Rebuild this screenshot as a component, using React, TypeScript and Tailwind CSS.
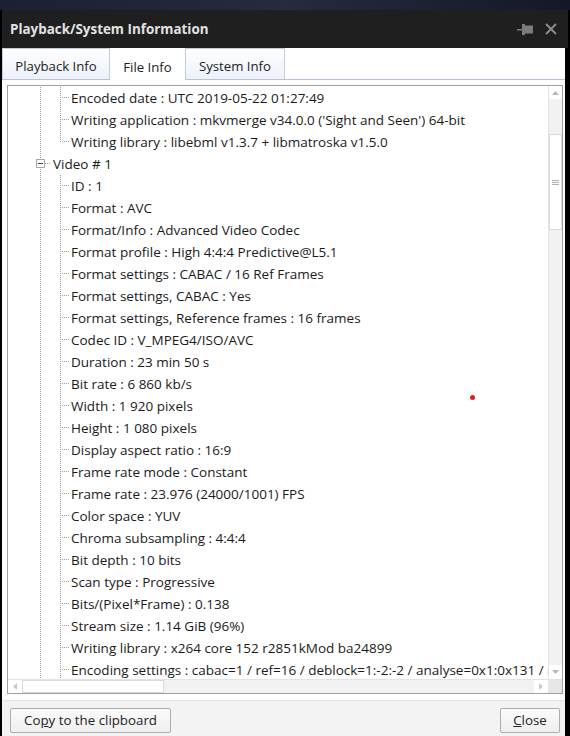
import React from "react";

type Row = { level: 1 | 2; text: string; last?: boolean; open?: boolean };

const rows: Row[] = [
  { level: 2, text: "Encoded date : UTC 2019-05-22 01:27:49" },
  { level: 2, text: "Writing application : mkvmerge v34.0.0 ('Sight and Seen') 64-bit" },
  { level: 2, text: "Writing library : libebml v1.3.7 + libmatroska v1.5.0", last: true },
  { level: 1, text: "Video # 1", open: true },
  { level: 2, text: "ID : 1" },
  { level: 2, text: "Format : AVC" },
  { level: 2, text: "Format/Info : Advanced Video Codec" },
  { level: 2, text: "Format profile : High 4:4:4 Predictive@L5.1" },
  { level: 2, text: "Format settings : CABAC / 16 Ref Frames" },
  { level: 2, text: "Format settings, CABAC : Yes" },
  { level: 2, text: "Format settings, Reference frames : 16 frames" },
  { level: 2, text: "Codec ID : V_MPEG4/ISO/AVC" },
  { level: 2, text: "Duration : 23 min 50 s" },
  { level: 2, text: "Bit rate : 6 860 kb/s" },
  { level: 2, text: "Width : 1 920 pixels" },
  { level: 2, text: "Height : 1 080 pixels" },
  { level: 2, text: "Display aspect ratio : 16:9" },
  { level: 2, text: "Frame rate mode : Constant" },
  { level: 2, text: "Frame rate : 23.976 (24000/1001) FPS" },
  { level: 2, text: "Color space : YUV" },
  { level: 2, text: "Chroma subsampling : 4:4:4" },
  { level: 2, text: "Bit depth : 10 bits" },
  { level: 2, text: "Scan type : Progressive" },
  { level: 2, text: "Bits/(Pixel*Frame) : 0.138" },
  { level: 2, text: "Stream size : 1.14 GiB (96%)" },
  { level: 2, text: "Writing library : x264 core 152 r2851kMod ba24899" },
  {
    level: 2,
    text: "Encoding settings : cabac=1 / ref=16 / deblock=1:-2:-2 / analyse=0x1:0x131 / me=umh / subme=10",
  },
];

const dot = { stroke: "#a0a0a0", strokeWidth: 1, strokeDasharray: "1 1", shapeRendering: "crispEdges" as const };

// connector lines drawn to the left of each tree item
function Connectors({ row }: { row: Row }) {
  if (row.level === 1) {
    return (
      <svg width="44" height="22" className="shrink-0">
        <line x1="32.5" y1="0" x2="32.5" y2="22" {...dot} />
        <rect x="28.5" y="6.5" width="8" height="8" fill="#fff" stroke="#a8a8a8" shapeRendering="crispEdges" />
        <line x1="30" y1="10.5" x2="35" y2="10.5" stroke="#404040" shapeRendering="crispEdges" />
        <line x1="37" y1="10.5" x2="43" y2="10.5" {...dot} />
      </svg>
    );
  }
  return (
    <svg width="63" height="22" className="shrink-0">
      <line x1="32.5" y1="0" x2="32.5" y2="22" {...dot} />
      <line x1="52.5" y1="0" x2="52.5" y2={row.last ? 11 : 22} {...dot} />
      <line x1="54" y1="10.5" x2="62" y2="10.5" {...dot} />
    </svg>
  );
}

function VScroll() {
  return (
    <div className="w-[14px] shrink-0 flex flex-col border-l border-[#e3e3e3] bg-[#f2f2f2]">
      <div className="h-[13px] bg-white flex items-center justify-center">
        <svg width="7" height="4"><path d="M0 4 L3.5 0 L7 4 Z" fill="#b8b8b8" /></svg>
      </div>
      <div className="h-[35px]" />
      <div className="h-[96px] bg-white border border-[#dadada] flex items-center justify-center">
        <div className="flex flex-col gap-[1px]">
          <div className="w-[7px] h-px bg-[#b0b0b0]" />
          <div className="w-[7px] h-px bg-[#b0b0b0]" />
          <div className="w-[7px] h-px bg-[#b0b0b0]" />
        </div>
      </div>
      <div className="flex-1" />
      <div className="h-[14px] bg-white flex items-center justify-center">
        <svg width="7" height="4"><path d="M0 0 L3.5 4 L7 0 Z" fill="#b8b8b8" /></svg>
      </div>
    </div>
  );
}

function HScroll() {
  return (
    <div className="h-[14px] shrink-0 flex border-t border-[#e3e3e3]">
      <div className="flex-1 flex bg-[#f2f2f2]">
        <div className="w-[14px] bg-white flex items-center justify-center">
          <svg width="4" height="7"><path d="M4 0 L0 3.5 L4 7 Z" fill="#c8c8c8" /></svg>
        </div>
        <div className="w-[142px] bg-white border border-[#dadada]" />
        <div className="flex-1" />
        <div className="w-[14px] bg-white flex items-center justify-center">
          <svg width="4" height="7"><path d="M0 0 L4 3.5 L0 7 Z" fill="#c8c8c8" /></svg>
        </div>
      </div>
      <div className="w-[14px] bg-[#e6e6e6]" />
    </div>
  );
}

export default function App() {
  return (
    <div className="w-[570px] h-[736px] bg-black flex flex-col overflow-hidden relative font-['Open_Sans',sans-serif]">
      {/* desktop behind the window */}
      <div className="h-[10px] shrink-0 bg-gradient-to-r from-[#1b2033] via-[#252b40] to-[#141826]" />

      <div className="flex-1 flex pl-[2px] pr-[5px] min-h-0">
        <div className="flex-1 min-w-0 flex flex-col bg-white">
          {/* title bar */}
          <div className="h-[38px] shrink-0 bg-[#1f1f1f] flex items-center pl-[8px] pr-[11px] -mr-[3px]">
            <div className="text-[13.4px] font-bold text-[#e2e2e2] flex-1">Playback/System Information</div>
            <svg width="16" height="11" viewBox="0 0 16 11" className="mr-[12px]">
              <rect x="0" y="5" width="5" height="1.5" fill="#7c7c7c" />
              <rect x="5" y="0" width="3" height="11" fill="#7c7c7c" />
              <rect x="8" y="1.5" width="8" height="8" fill="#7c7c7c" />
            </svg>
            <svg width="12" height="12" viewBox="0 0 12 12">
              <path d="M1 1 L11 11 M11 1 L1 11" stroke="#8a8a8a" strokeWidth="2" />
            </svg>
          </div>

          {/* tabs */}
          <div className="h-[32px] shrink-0 flex items-end border-b border-[#b9c1d8] text-[13.2px] text-[#222]">
            <div className="h-[31px] w-[108px] flex items-center justify-center pt-[5px] border border-b-0 border-[#c3cbe0] bg-gradient-to-b from-white to-[#eef1f9]">
              Playback Info
            </div>
            <div className="h-[32px] w-[75px] -mb-px flex items-center justify-center pt-[8px] bg-white">
              File Info
            </div>
            <div className="h-[31px] w-[100px] flex items-center justify-center pt-[5px] border border-b-0 border-[#c3cbe0] bg-gradient-to-b from-white to-[#eef1f9]">
              System Info
            </div>
          </div>

          {/* tree panel */}
          <div className="pl-[5px] pt-[5px] pr-[2px] shrink-0">
            <div className="h-[609px] border border-[#a0a0a0] flex flex-col">
              <div className="flex-1 flex min-h-0">
                <div className="flex-1 min-w-0 overflow-hidden pt-px text-[13.5px] text-[#1a1a1a]">
                  {rows.map((r, i) => (
                    <div key={i} className="h-[22px] flex items-center whitespace-nowrap">
                      <Connectors row={r} />
                      <span className={r.level === 1 ? "ml-[1px]" : ""}>{r.text}</span>
                    </div>
                  ))}
                </div>
                <VScroll />
              </div>
              <HScroll />
            </div>
          </div>

          {/* buttons */}
          <div className="flex-1 mt-[6px] border-t border-[#e4e4e4] bg-[#f3f3f3] flex items-start justify-between pl-[8px] pr-[5px] pt-[7px] text-[13.3px] text-[#222]">
            <button className="h-[25px] w-[161px] border border-[#adadad] rounded-[2px] bg-gradient-to-b from-[#fbfbfb] to-[#efefef]">
              Co<span className="underline">p</span>y to the clipboard
            </button>
            <button className="h-[25px] w-[60px] border border-[#adadad] rounded-[2px] bg-gradient-to-b from-[#fbfbfb] to-[#efefef]">
              <span className="underline">C</span>lose
            </button>
          </div>
        </div>
      </div>

      {/* stray red marker */}
      <div className="absolute left-[470px] top-[395px] w-[5px] h-[5px] rounded-full bg-[#e02020]" />
    </div>
  );
}
